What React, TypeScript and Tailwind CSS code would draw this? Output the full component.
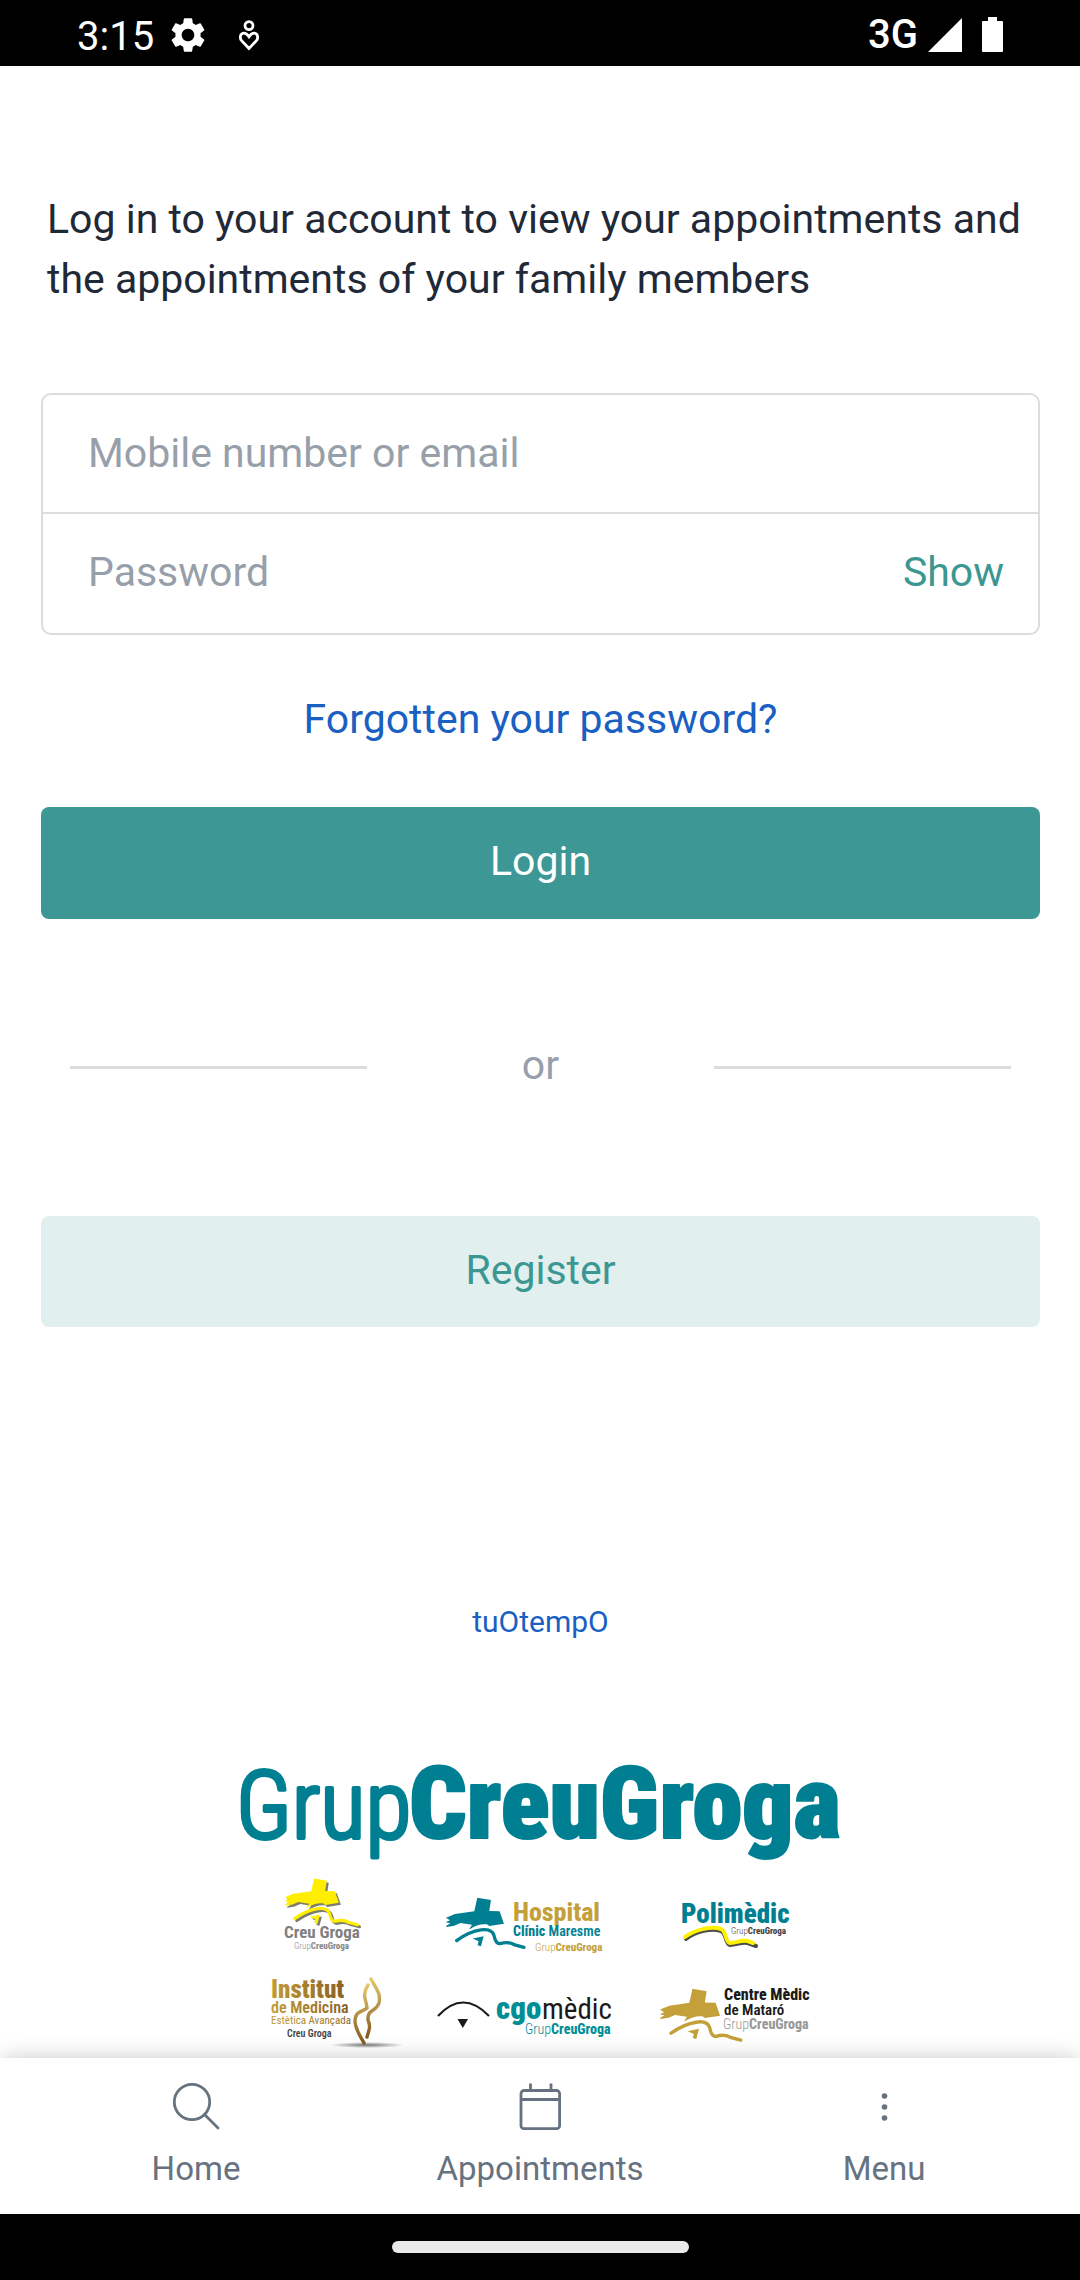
import { useState, ReactNode } from 'react';
import { MdSettings } from 'react-icons/md';

const StatusBar = () => (
  <div className="flex h-[66px] items-center justify-between bg-black pt-1 pr-[76px] pl-[77px] text-white">
    <div className="flex items-center">
      <span className="pt-1 text-[40px] leading-[48px]">3:15</span>
      <MdSettings className="ml-[13px] size-[42px]" />
      <svg viewBox="0 0 24 32" className="ml-7 h-8 w-6" fill="none" stroke="currentColor" strokeWidth="2.8">
        <circle cx="12" cy="6.6" r="4" />
        <path d="M12 29.5 L4.6 21.6 C2.4 19 3.2 14.6 6.6 14.2 C9 14 10.6 15.8 12 17.8 C13.4 15.8 15 14 17.4 14.2 C20.8 14.6 21.6 19 19.4 21.6 Z" />
      </svg>
    </div>
    <div className="flex items-center">
      <span className="text-[40px] leading-[48px] font-medium">3G</span>
      <svg viewBox="0 0 34 36" className="ml-[10px] h-9 w-[34px]" fill="currentColor">
        <path d="M34 1 V35 H0 Z" />
      </svg>
      <svg viewBox="0 0 22 36" className="ml-5 h-9 w-[22px]" fill="currentColor">
        <path d="M6 0 H15 V4 H20 Q21 4 21 5 V34 Q21 35 20 35 H1 Q0 35 0 34 V5 Q0 4 1 4 H6 Z" />
      </svg>
    </div>
  </div>
);

const LoginForm = () => {
  const [visible, setVisible] = useState(false);

  return (
    <form onSubmit={(e) => e.preventDefault()}>
      <div className="mt-[84px] rounded-[10px] border-2 border-[#dcdcdc]">
        <input
          type="text"
          aria-label="Mobile number or email"
          placeholder="Mobile number or email"
          className="block h-[117px] w-full px-[45px] pb-0.5 outline-none placeholder:text-[#979fab]"
        />
        <div className="flex h-[121px] items-center border-t-2 border-[#dcdcdc] pr-[34px] pb-1">
          <input
            type={visible ? 'text' : 'password'}
            aria-label="Password"
            placeholder="Password"
            className="min-w-0 flex-1 pl-[45px] outline-none placeholder:text-[#979fab]"
          />
          <button type="button" className="text-[#3c9793]" onClick={() => setVisible(!visible)}>
            Show
          </button>
        </div>
      </div>
      <div className="mt-[54px] text-center">
        <a href="#forgotten" className="text-[#1a60c2]">
          Forgotten your password?
        </a>
      </div>
      <button type="submit" className="mt-[58px] block h-28 w-full rounded-lg bg-[#3c9795] pb-1 text-white">
        Login
      </button>
    </form>
  );
};

interface GroupNameProps {
  x: number;
  y: number;
  size: number;
  fill: string;
}

const GroupName = ({ x, y, size, fill }: GroupNameProps) => (
  <text x={x} y={y} fontSize={size} fill={fill}>
    <tspan fontWeight="300">Grup</tspan>
    <tspan fontWeight="800">CreuGroga</tspan>
  </text>
);

interface CrossProps {
  x: number;
  y: number;
  scale: number;
  fill: string;
}

const Cross = ({ x, y, scale, fill }: CrossProps) => (
  <g transform={`translate(${x} ${y}) scale(${scale})`} fill={fill}>
    <path d="M97 5 L138 12 L133 45 L164 46 L177 83 L133 90 L126 85 Q100 82 72 101 L81 86 L46 81 L28 89 L5 93 L3 90 L16 82 L2 79 L15 73 L3 65 L30 54 L88 46 Z" />
    <path
      d="M35 134 Q72 107 108 102 Q140 97 147 118 Q152 145 166 143 Q190 135 210 147 L237 154"
      fill="none"
      stroke={fill}
      strokeWidth="10"
      strokeLinecap="round"
    />
    <path d="M83 128 L116 121 L108 151 L98 148 L101 136 Z" />
  </g>
);

const GroupLogos = () => (
  <svg
    viewBox="1 0 600 296"
    className="mx-auto mt-[117px] block w-[600px] max-w-full overflow-visible font-['Roboto_Condensed','Roboto',sans-serif]"
    role="img"
    aria-label="Grup Creu Groga"
  >
    <defs>
      <linearGradient id="gold" x1="0" x2="1">
        <stop offset="0" stopColor="#c19c35" />
        <stop offset="1" stopColor="#8a6126" />
      </linearGradient>
      <linearGradient id="figure" x1="0" y1="0" x2="0" y2="1">
        <stop offset="0" stopColor="#e3c86c" />
        <stop offset="1" stopColor="#835a20" />
      </linearGradient>
      <radialGradient id="ground">
        <stop offset="0" stopColor="#777" />
        <stop offset="1" stopColor="#777" stopOpacity="0" />
      </radialGradient>
    </defs>

    <g fill="#007f92" stroke="#007f92" strokeLinejoin="round">
      <text x="-4" y="77" fontSize="94" fontWeight="300" strokeWidth="4">
        Grup
      </text>
      <text x="169" y="77" fontSize="101" fontWeight="900" strokeWidth="2">
        CreuGroga
      </text>
    </g>

    {/* Creu Groga */}
    <Cross x={46} y={118} scale={0.31} fill="#7d7d6c" />
    <Cross x={44} y={116} scale={0.31} fill="#ffee00" />
    <text x="44" y="177" fontSize="17" fontWeight="700" fill="#808080">
      Creu Groga
    </text>
    <GroupName x={54} y={188} size={9} fill="#8a8a8a" />

    {/* Hospital Clínic Maresme */}
    <Cross x={205} y={135} scale={0.333} fill="#007f92" />
    <text x="273" y="160" fontSize="26" fontWeight="800" fill="#c4a03a">
      Hospital
    </text>
    <text x="273" y="175" fontSize="14" fontWeight="600" fill="#007f92">
      <tspan fontWeight="800">Clínic</tspan> Maresme
    </text>
    <GroupName x={295} y={190} size={11} fill="#c4a03a" />

    {/* Polimèdic */}
    <text x="441" y="162" fontSize="27" fontWeight="900" fill="#007f92">
      Polimèdic
    </text>
    <g fill="none" strokeWidth="4" strokeLinecap="round">
      <path d="M446 178 C456 170 472 167 481 170 C487 173 485 183 490 184 C498 184 504 179 510 183 L516 185" stroke="#4b4b4b" />
      <path d="M445 176 C456 168 472 165 481 168 C487 171 485 181 490 182 C498 182 504 177 510 181 L513 182" stroke="#fff200" />
    </g>
    <GroupName x={491} y={173} size={9} fill="#444" />

    {/* Institut de Medicina Estètica Avançada */}
    <g fill="url(#gold)">
      <text x="31" y="237" fontSize="25" fontWeight="900">
        Institut
      </text>
      <text x="31" y="252" fontSize="16" fontWeight="600">
        de Medicina
      </text>
      <text x="31" y="263" fontSize="11">
        Estètica Avançada
      </text>
    </g>
    <text x="47" y="276" fontSize="10" fontWeight="600" fill="#444">
      Creu Groga
    </text>
    <ellipse cx="127" cy="284" rx="37" ry="3" fill="url(#ground)" />
    <g fill="none" stroke="url(#figure)" strokeWidth="3.4" strokeLinecap="round">
      <path d="M128 224 C121 235 127 240 127 247 C123 251 115 249 115 261 C116 270 121 276 124 282" />
      <path d="M131 218 C137 229 141 233 139 242 C136 251 127 248 128 259 C131 266 129 269 127 276" />
    </g>

    {/* cgomèdic */}
    <path d="M198 255 Q223 228 249 255" fill="none" stroke="#1a1a1a" strokeWidth="2.2" />
    <path d="M217.5 258 H228 L222.8 267 Z" fill="#1a1a1a" />
    <text x="256" y="258" fontSize="31" fontWeight="900" fill="#008e96">
      cgo
    </text>
    <text x="302" y="258" fontSize="29" fill="#1a1a1a">
      mèdic
    </text>
    <GroupName x={285} y={273} size={14} fill="#008e96" />

    {/* Centre Mèdic de Mataró */}
    <Cross x={419} y={226} scale={0.345} fill="#c4a03a" />
    <text x="484" y="239" fontSize="16" fontWeight="800" fill="#1a1a1a">
      Centre Mèdic
    </text>
    <text x="484" y="254" fontSize="15" fontWeight="600" fill="#1a1a1a">
      de Mataró
    </text>
    <GroupName x={483} y={268} size={14} fill="#999" />
  </svg>
);

interface NavItemProps {
  label: string;
  href: string;
  children: ReactNode;
}

const NavItem = ({ label, href, children }: NavItemProps) => (
  <a href={href} className="flex flex-col items-center gap-[19px]">
    <svg viewBox="0 0 48 48" className="size-12" fill="none" stroke="currentColor" strokeWidth="2.8">
      {children}
    </svg>
    <span className="text-[33px] leading-[40px]">{label}</span>
  </a>
);

const BottomNav = () => (
  <nav className="relative grid grid-cols-3 bg-white px-6 pt-6 pb-[25px] text-[#66727f] shadow-[0_-4px_20px_-4px_rgba(0,0,0,0.22)]">
    <NavItem label="Home" href="#home">
      <circle cx="20" cy="20" r="17.7" />
      <path d="M32.5 32.5 L46 46" strokeLinecap="round" />
    </NavItem>
    <NavItem label="Appointments" href="#appointments">
      <rect x="5" y="8.5" width="38.6" height="38.2" rx="3" />
      <path d="M14.5 1.5 V8 M35 1.5 V8 M5 17.5 H43" />
    </NavItem>
    <NavItem label="Menu" href="#menu">
      <g fill="currentColor" stroke="none">
        <circle cx="24.5" cy="14" r="2.8" />
        <circle cx="24.5" cy="25" r="2.8" />
        <circle cx="24.5" cy="36" r="2.8" />
      </g>
    </NavItem>
  </nav>
);

export default function App() {
  return (
    <div className="flex min-h-screen flex-col bg-white font-['Roboto',sans-serif]">
      <StatusBar />
      <main className="flex-1 px-10 pt-[123px] pl-[41px] text-[41px] leading-[60px]">
        <p className="px-[6px] text-[#1f2937]">
          Log in to your account to view your appointments and the appointments of your family members
        </p>
        <LoginForm />
        <div className="mt-[116px] flex items-center justify-between px-[29px] text-[#979fab]">
          <span className="h-[3px] w-[297px] bg-[#dadcde]" />
          <span className="pb-1">or</span>
          <span className="h-[3px] w-[297px] bg-[#dadcde]" />
        </div>
        <button type="button" className="mt-[117px] block h-[111px] w-full rounded-lg bg-[#e1efee] pb-1 text-[#3c9793]">
          Register
        </button>
        <div className="mt-[273px] text-center text-[30px] leading-[44px]">
          <a href="#tuotempo" className="text-[#1a60c2]">
            tuOtempO
          </a>
        </div>
        <GroupLogos />
      </main>
      <BottomNav />
      <div className="flex h-[66px] items-center justify-center bg-black">
        <span className="h-3 w-[297px] rounded-full bg-[#eaeaea]" />
      </div>
    </div>
  );
}
